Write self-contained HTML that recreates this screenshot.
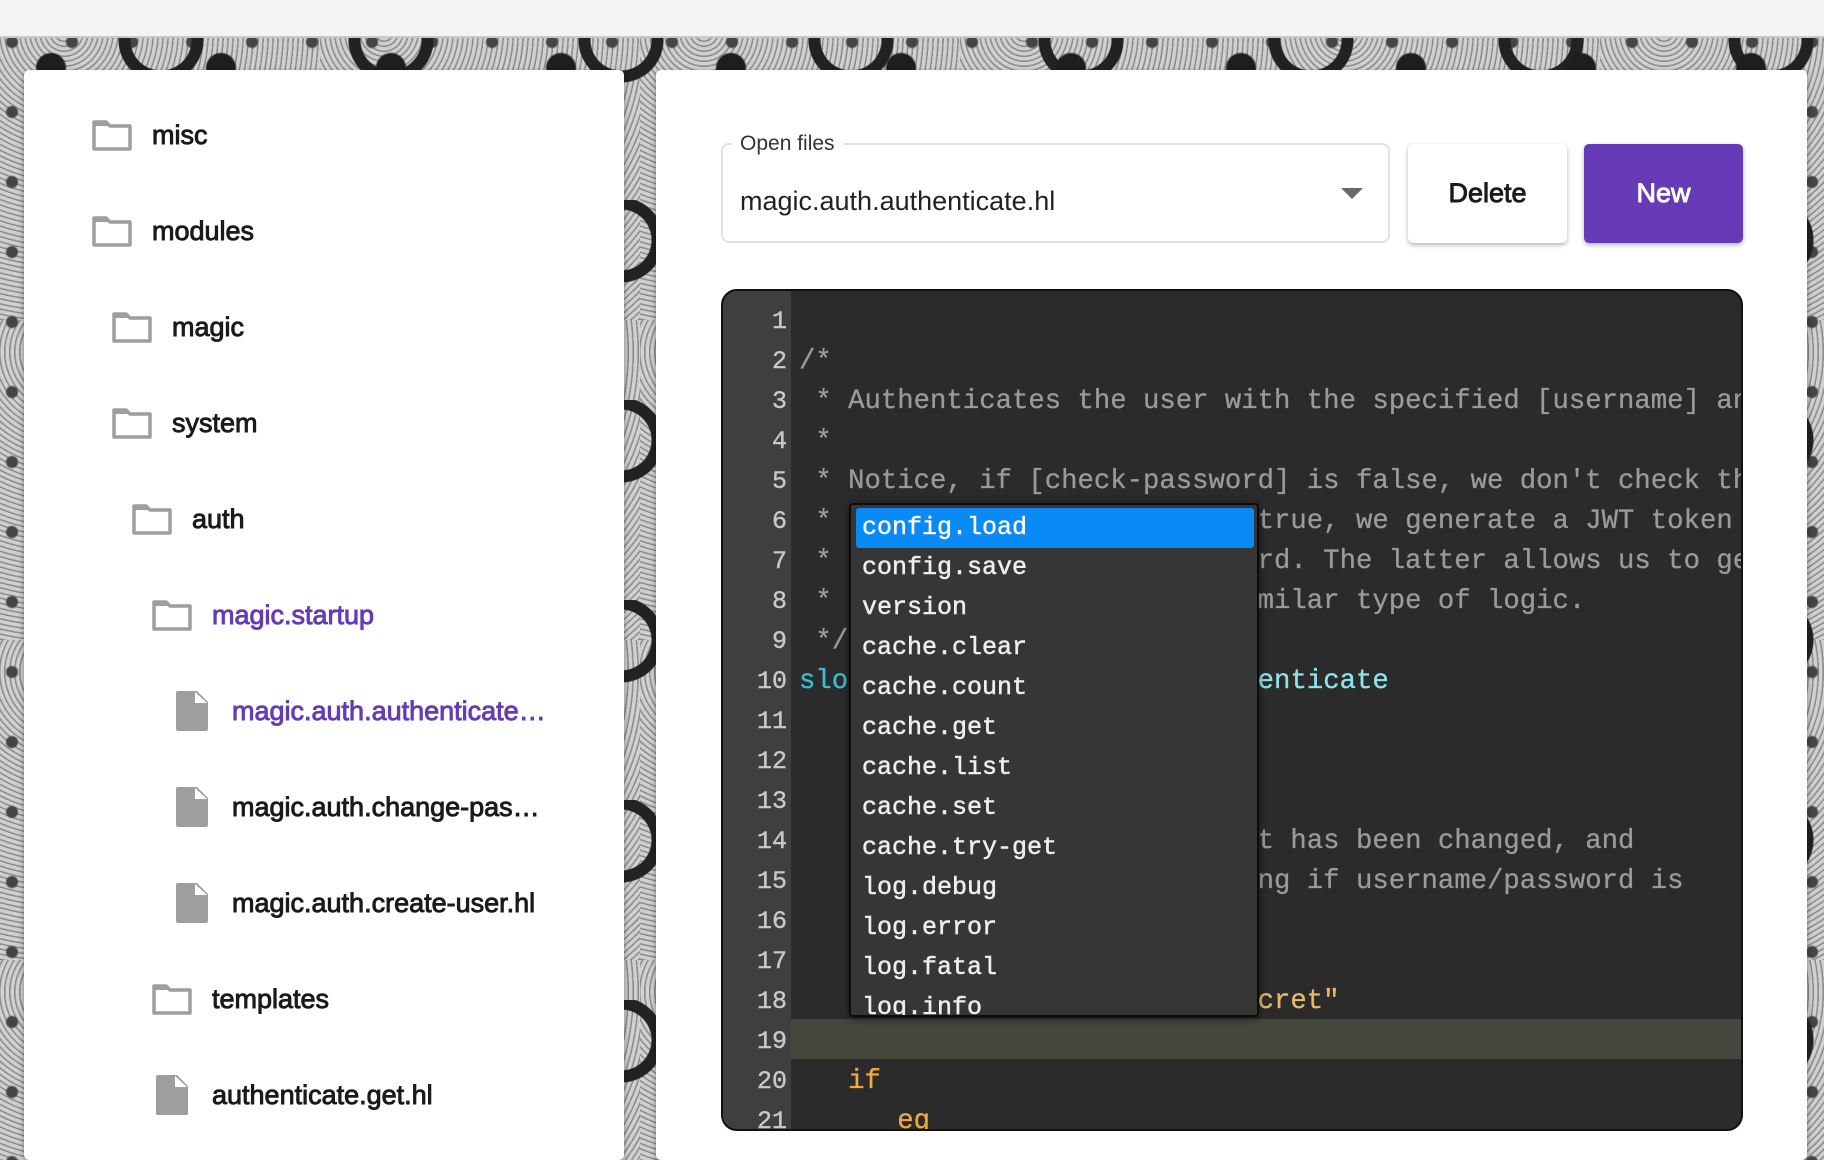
<!DOCTYPE html>
<html><head><meta charset="utf-8"><style>
*{box-sizing:border-box;margin:0;padding:0}
body{width:1824px;height:1140px;overflow:hidden;position:relative;font-family:"Liberation Sans",sans-serif;
background-color:#b5b5b5;
background-image:
radial-gradient(circle at 30% 40%, #1e1e1e 0 14px, transparent 16px),
radial-gradient(circle at 70% 20%, transparent 0 30px,#222 31px 42px, transparent 43px),
radial-gradient(circle at 50% 80%, #333 0 8px, transparent 10px),
radial-gradient(circle at 20% 60%, #444 0 5px, transparent 7px),
repeating-radial-gradient(circle at 20% 10%, #d0d0d0 0 3px,#8a8a8a 4px 5px);
background-size:170px 170px,230px 200px,90px 110px,60px 70px,320px 320px;}
.top{position:absolute;left:0;top:0;width:1824px;height:38px;background:#f4f4f4;border-bottom:2px solid #c8c8c8}
.panel{position:absolute;background:#fff;border-radius:5px;top:70px;height:1090px;box-shadow:0 2px 6px rgba(0,0,0,.4)}
.item{position:absolute;height:40px;display:flex;align-items:center;font-size:27px;color:#1a1a1a;-webkit-text-stroke:.9px currentColor;white-space:nowrap}
.item.p{color:#673ab7}
.item svg{position:absolute;left:0}
.item span{position:absolute}
.code{position:absolute;left:721px;top:289px;width:1022px;height:842px;background:#2b2b2b;border:2px solid #111;border-radius:16px;overflow:hidden}
.gut{position:absolute;left:0;top:0;width:68px;height:100%;background:#3f3f3f}
.ln{position:absolute;left:0;width:64px;text-align:right;font-family:"Liberation Mono",monospace;font-size:25px;color:#c8c8c8;height:40px;line-height:40px;-webkit-text-stroke:.4px #c8c8c8}
.tx{position:absolute;left:76px;font-family:"Liberation Mono",monospace;font-size:27.3px;color:#9a9a9a;height:40px;line-height:40px;white-space:pre;-webkit-text-stroke:.3px currentColor}
.ac{position:absolute;left:849px;top:503px;width:410px;height:514px;background:#363636;border:2px solid #0c0c0c;border-radius:4px;overflow:hidden;box-shadow:0 2px 8px rgba(0,0,0,.5)}
.ai{position:absolute;left:5px;width:398px;height:40px;line-height:40px;padding-left:6px;font-family:"Liberation Mono",monospace;font-size:25px;color:#eee;-webkit-text-stroke:.5px #eee}
.lines{position:absolute;left:0;top:3px;width:100%;height:100%}
</style></head><body>
<div class="top"></div>
<div class="panel" style="left:24px;width:600px"></div>
<div class="panel" style="left:656px;width:1151px"></div>

<div class="item" style="left:92px;top:115px"><svg width="40" height="32" viewBox="0 0 40 32"><path d="M2 3h12l4 4h20v23H2z" fill="none" stroke="#9e9e9e" stroke-width="3.5" stroke-linejoin="round"/><path d="M2 3h12l4 4H2z" fill="#9e9e9e"/></svg><span style="left:60px">misc</span></div>
<div class="item" style="left:92px;top:211px"><svg width="40" height="32" viewBox="0 0 40 32"><path d="M2 3h12l4 4h20v23H2z" fill="none" stroke="#9e9e9e" stroke-width="3.5" stroke-linejoin="round"/><path d="M2 3h12l4 4H2z" fill="#9e9e9e"/></svg><span style="left:60px">modules</span></div>
<div class="item" style="left:112px;top:307px"><svg width="40" height="32" viewBox="0 0 40 32"><path d="M2 3h12l4 4h20v23H2z" fill="none" stroke="#9e9e9e" stroke-width="3.5" stroke-linejoin="round"/><path d="M2 3h12l4 4H2z" fill="#9e9e9e"/></svg><span style="left:60px">magic</span></div>
<div class="item" style="left:112px;top:403px"><svg width="40" height="32" viewBox="0 0 40 32"><path d="M2 3h12l4 4h20v23H2z" fill="none" stroke="#9e9e9e" stroke-width="3.5" stroke-linejoin="round"/><path d="M2 3h12l4 4H2z" fill="#9e9e9e"/></svg><span style="left:60px">system</span></div>
<div class="item" style="left:132px;top:499px"><svg width="40" height="32" viewBox="0 0 40 32"><path d="M2 3h12l4 4h20v23H2z" fill="none" stroke="#9e9e9e" stroke-width="3.5" stroke-linejoin="round"/><path d="M2 3h12l4 4H2z" fill="#9e9e9e"/></svg><span style="left:60px">auth</span></div>
<div class="item p" style="left:152px;top:595px"><svg width="40" height="32" viewBox="0 0 40 32"><path d="M2 3h12l4 4h20v23H2z" fill="none" stroke="#9e9e9e" stroke-width="3.5" stroke-linejoin="round"/><path d="M2 3h12l4 4H2z" fill="#9e9e9e"/></svg><span style="left:60px">magic.startup</span></div>
<div class="item p" style="left:175px;top:691px"><svg width="34" height="40" viewBox="0 0 34 40"><path d="M3 0h19l11 11v27a2 2 0 0 1-2 2H3a2 2 0 0 1-2-2V2a2 2 0 0 1 2-2z" fill="#9e9e9e"/><path d="M20 1v11h12z" fill="#fff"/></svg><span style="left:57px">magic.auth.authenticate…</span></div>
<div class="item" style="left:175px;top:787px"><svg width="34" height="40" viewBox="0 0 34 40"><path d="M3 0h19l11 11v27a2 2 0 0 1-2 2H3a2 2 0 0 1-2-2V2a2 2 0 0 1 2-2z" fill="#9e9e9e"/><path d="M20 1v11h12z" fill="#fff"/></svg><span style="left:57px">magic.auth.change-pas…</span></div>
<div class="item" style="left:175px;top:883px"><svg width="34" height="40" viewBox="0 0 34 40"><path d="M3 0h19l11 11v27a2 2 0 0 1-2 2H3a2 2 0 0 1-2-2V2a2 2 0 0 1 2-2z" fill="#9e9e9e"/><path d="M20 1v11h12z" fill="#fff"/></svg><span style="left:57px">magic.auth.create-user.hl</span></div>
<div class="item" style="left:152px;top:979px"><svg width="40" height="32" viewBox="0 0 40 32"><path d="M2 3h12l4 4h20v23H2z" fill="none" stroke="#9e9e9e" stroke-width="3.5" stroke-linejoin="round"/><path d="M2 3h12l4 4H2z" fill="#9e9e9e"/></svg><span style="left:60px">templates</span></div>
<div class="item" style="left:155px;top:1075px"><svg width="34" height="40" viewBox="0 0 34 40"><path d="M3 0h19l11 11v27a2 2 0 0 1-2 2H3a2 2 0 0 1-2-2V2a2 2 0 0 1 2-2z" fill="#9e9e9e"/><path d="M20 1v11h12z" fill="#fff"/></svg><span style="left:57px">authenticate.get.hl</span></div>

<div style="position:absolute;left:721px;top:143px;width:669px;height:100px;border:2px solid #e2e2e2;border-radius:8px"></div>
<div style="position:absolute;left:732px;top:131px;background:#fff;padding:0 8px;font-size:21px;color:#333;line-height:26px">Open files</div>
<div style="position:absolute;left:740px;top:184px;font-size:27px;color:#222;line-height:34px">magic.auth.authenticate.hl</div>
<div style="position:absolute;left:1341px;top:188px;width:0;height:0;border-left:11px solid transparent;border-right:11px solid transparent;border-top:11px solid #6a6a6a"></div>
<div style="position:absolute;left:1408px;top:144px;width:159px;height:99px;background:#fff;border-radius:5px;box-shadow:0 2px 5px rgba(0,0,0,.3);display:flex;align-items:center;justify-content:center;font-size:27px;color:#1a1a1a;-webkit-text-stroke:.9px #1a1a1a">Delete</div>
<div style="position:absolute;left:1584px;top:144px;width:159px;height:99px;background:#673ab7;border-radius:5px;box-shadow:0 2px 5px rgba(0,0,0,.3);display:flex;align-items:center;justify-content:center;font-size:27px;color:#fff;-webkit-text-stroke:.9px #fff">New</div>

<div class="code">
<div class="gut"></div>
<div style="position:absolute;left:68px;top:728px;width:1000px;height:40px;background:#46473c"></div>
<div class="lines">
<div class="ln" style="top:8px">1</div><div class="ln" style="top:48px">2</div><div class="ln" style="top:88px">3</div><div class="ln" style="top:128px">4</div><div class="ln" style="top:168px">5</div><div class="ln" style="top:208px">6</div><div class="ln" style="top:248px">7</div><div class="ln" style="top:288px">8</div><div class="ln" style="top:328px">9</div><div class="ln" style="top:368px">10</div><div class="ln" style="top:408px">11</div><div class="ln" style="top:448px">12</div><div class="ln" style="top:488px">13</div><div class="ln" style="top:528px">14</div><div class="ln" style="top:568px">15</div><div class="ln" style="top:608px">16</div><div class="ln" style="top:648px">17</div><div class="ln" style="top:688px">18</div><div class="ln" style="top:728px">19</div><div class="ln" style="top:768px">20</div><div class="ln" style="top:808px">21</div>
<div class="tx" style="top:48px">/*</div>
<div class="tx" style="top:88px"> * Authenticates the user with the specified [username] and</div>
<div class="tx" style="top:128px"> *</div>
<div class="tx" style="top:168px"> * Notice, if [check-password] is false, we don't check the</div>
<div class="tx" style="top:208px"> * If [reference-ticket] is true, we generate a JWT token that</div>
<div class="tx" style="top:248px"> * references the old password. The latter allows us to get</div>
<div class="tx" style="top:288px"> * invocations, and other similar type of logic.</div>
<div class="tx" style="top:328px"> */</div>
<div class="tx" style="top:368px;color:#3bbfd0">slots.create:magic.auth.aut<span style="color:#8ee3ea">henticate</span></div>
<div class="tx" style="top:528px">    Checking if the passwor t has been changed, and</div>
<div class="tx" style="top:568px">    returning success/faili ng if username/password is</div>
<div class="tx" style="top:688px;color:#e8b86a">   .secret:"...............ecret"</div>
<div class="tx" style="top:768px;color:#f0a93b">   if</div>
<div class="tx" style="top:808px;color:#f0a93b">      eq</div>
</div>
</div>

<div class="ac">
<div class="ai" style="top:3px;background:#0a8af5;color:#fff;border-radius:3px">config.load</div>
<div class="ai" style="top:43px">config.save</div>
<div class="ai" style="top:83px">version</div>
<div class="ai" style="top:123px">cache.clear</div>
<div class="ai" style="top:163px">cache.count</div>
<div class="ai" style="top:203px">cache.get</div>
<div class="ai" style="top:243px">cache.list</div>
<div class="ai" style="top:283px">cache.set</div>
<div class="ai" style="top:323px">cache.try-get</div>
<div class="ai" style="top:363px">log.debug</div>
<div class="ai" style="top:403px">log.error</div>
<div class="ai" style="top:443px">log.fatal</div>
<div class="ai" style="top:483px">log.info</div>
</div>
</body></html>
